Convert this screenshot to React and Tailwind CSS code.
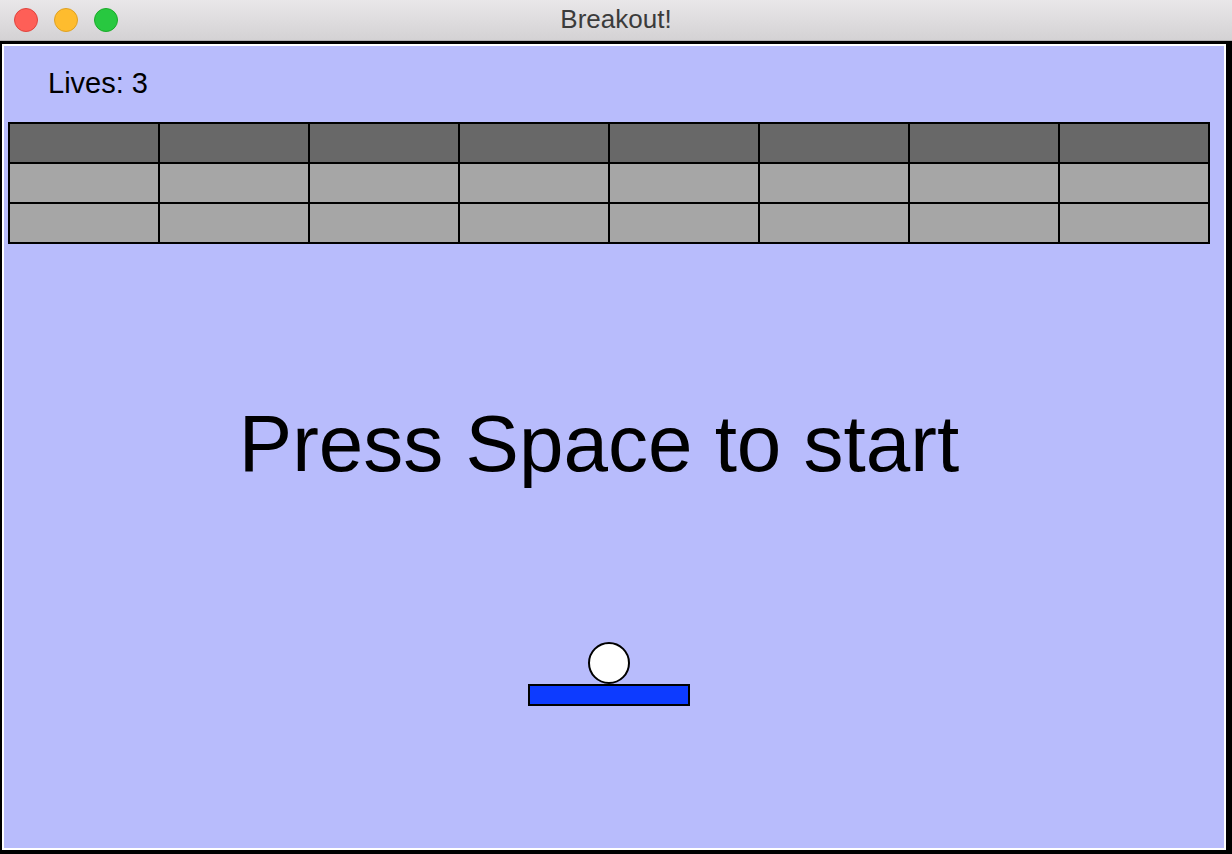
export default function App() {
  const cols = Array.from({ length: 8 });
  return (
    <div
      className="w-[1232px] h-[854px] bg-black flex flex-col overflow-hidden"
      style={{ fontFamily: '"Liberation Sans", Arial, sans-serif' }}
    >
      {/* Title bar */}
      <div className="relative h-[41px] shrink-0 bg-gradient-to-b from-[#e9e7e9] to-[#d4d2d4] border-b border-[#b3b1b3] flex items-center justify-center">
        <div className="absolute left-[14px] top-[8px] flex gap-[16px]">
          <div className="w-[24px] h-[24px] rounded-full bg-[#fe5f57] border border-[#e0443e]" />
          <div className="w-[24px] h-[24px] rounded-full bg-[#febc2e] border border-[#dea123]" />
          <div className="w-[24px] h-[24px] rounded-full bg-[#28c840] border border-[#1aab29]" />
        </div>
        <span className="text-[26px] leading-none text-[#3b3b3b] pb-[2px]">Breakout!</span>
      </div>

      {/* Window body */}
      <div className="flex-1 pt-[3px] pl-[2px] pr-[6px] pb-[4px] flex">
        <div className="flex-1 border-2 border-white bg-[#b8bcfc] flex flex-col">
          <div className="pt-[20px] pl-[44px] text-[29px] leading-[34px] text-black">Lives: 3</div>

          <div className="mt-[22px] ml-[4px] w-[1202px] grid grid-cols-8 gap-[2px] p-[2px] bg-black">
            {cols.map((_, i) => (
              <div key={`a${i}`} className="h-[38px] bg-[#686868]" />
            ))}
            {cols.map((_, i) => (
              <div key={`b${i}`} className="h-[38px] bg-[#a6a6a6]" />
            ))}
            {cols.map((_, i) => (
              <div key={`c${i}`} className="h-[38px] bg-[#a6a6a6]" />
            ))}
          </div>

          <div className="mt-[154px] flex justify-center pr-[30px] text-[80px] leading-[92px] text-black whitespace-nowrap">
            Press Space to start
          </div>

          <div className="mt-[152px] ml-[584px] w-[42px] h-[42px] rounded-full bg-white border-2 border-black" />
          <div className="ml-[524px] w-[162px] h-[22px] bg-[#0d3bff] border-2 border-black" />
        </div>
      </div>
    </div>
  );
}
